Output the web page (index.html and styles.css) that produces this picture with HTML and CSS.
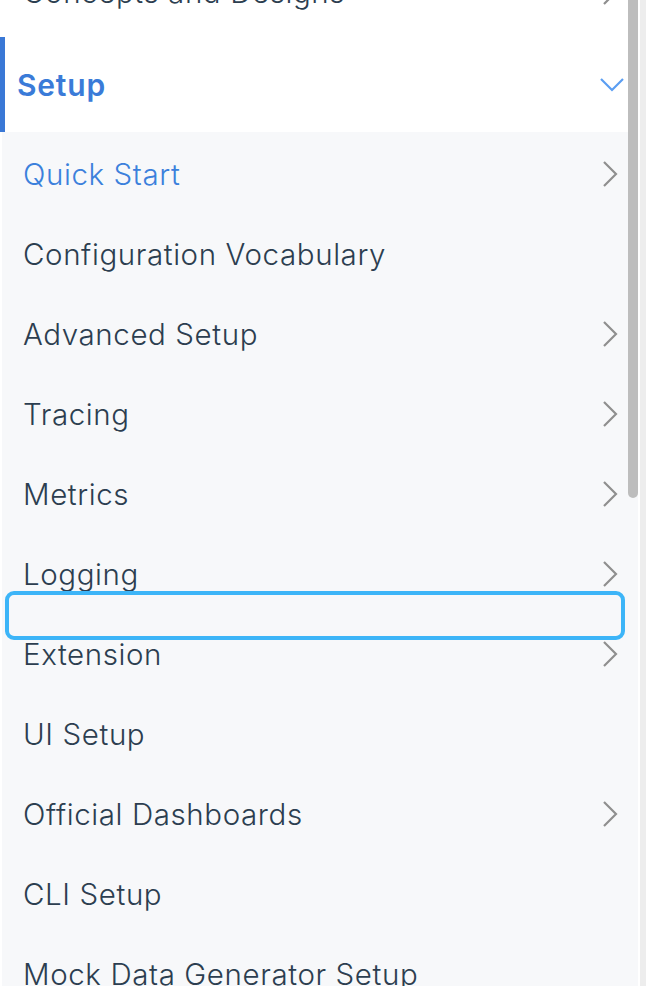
FILE: index.html
```html
<!DOCTYPE html>
<html>
<head>
<meta charset="utf-8">
<link rel="stylesheet" href="styles.css">
</head>
<body>
<div class="page">
  <nav class="sidebar">
    <div class="row prev">
      <span class="label">Concepts and Designs</span>
      <svg class="chev" viewBox="0 0 16 28"><path d="M2 2 L14 14 L2 26"/></svg>
    </div>
    <div class="group-head">
      <span class="label">Setup</span>
      <svg class="chev-down" viewBox="0 0 26 16"><path d="M2 2 L13 13 L24 2"/></svg>
    </div>
    <ul class="sub">
      <li class="row active"><span class="label">Quick Start</span><svg class="chev" viewBox="0 0 16 28"><path d="M2 2 L14 14 L2 26"/></svg></li>
      <li class="row"><span class="label">Configuration Vocabulary</span></li>
      <li class="row"><span class="label">Advanced Setup</span><svg class="chev" viewBox="0 0 16 28"><path d="M2 2 L14 14 L2 26"/></svg></li>
      <li class="row"><span class="label">Tracing</span><svg class="chev" viewBox="0 0 16 28"><path d="M2 2 L14 14 L2 26"/></svg></li>
      <li class="row"><span class="label">Metrics</span><svg class="chev" viewBox="0 0 16 28"><path d="M2 2 L14 14 L2 26"/></svg></li>
      <li class="row"><span class="label">Logging</span><svg class="chev" viewBox="0 0 16 28"><path d="M2 2 L14 14 L2 26"/></svg></li>
      <li class="row"><span class="label">Extension</span><svg class="chev" viewBox="0 0 16 28"><path d="M2 2 L14 14 L2 26"/></svg></li>
      <li class="row"><span class="label">UI Setup</span></li>
      <li class="row"><span class="label">Official Dashboards</span><svg class="chev" viewBox="0 0 16 28"><path d="M2 2 L14 14 L2 26"/></svg></li>
      <li class="row"><span class="label">CLI Setup</span></li>
      <li class="row"><span class="label">Mock Data Generator Setup</span></li>
    </ul>
    <div class="focus-ring"></div>
  </nav>
  <div class="scrollbar"><div class="thumb"></div></div>
  <div class="edge"></div>
</div>
</body>
</html>
```
FILE: styles.css
```css
html, body {
  margin: 0;
  padding: 0;
  background: #ffffff;
}
body {
  font-family: Inter, "Noto Sans", "Liberation Sans", sans-serif;
  color: #2c3e50;
}
.page {
  display: flex;
  width: 646px;
  height: 986px;
  overflow: hidden;
}
.sidebar {
  position: relative;
  width: 628px;
  flex: none;
  background: #ffffff;
}
.row {
  display: flex;
  align-items: center;
  justify-content: space-between;
  height: 80px;
  padding: 0 10px 0 23px;
  box-sizing: border-box;
  font-size: 29.5px;
  font-weight: 300;
  letter-spacing: 0.6px;
}
.prev {
  margin-top: -48px;
  margin-bottom: 5px;
}
.label {
  white-space: nowrap;
}
.chev {
  width: 16px;
  height: 28px;
  flex: none;
}
.chev path {
  fill: none;
  stroke: #8f8f8f;
  stroke-width: 2.2;
}
.group-head {
  display: flex;
  align-items: center;
  justify-content: space-between;
  height: 95px;
  padding: 0 3px 0 17px;
  border-left: 5px solid #3a78d6;
  box-sizing: border-box;
  font-size: 30px;
  font-weight: 600;
  letter-spacing: 0.8px;
  color: #3a7bd8;
}
.group-head .label {
  margin-left: -5px;
}
.chev-down {
  width: 26px;
  height: 16px;
  flex: none;
}
.chev-down path {
  fill: none;
  stroke: #5b9ef2;
  stroke-width: 2.2;
}
.sub {
  list-style: none;
  margin: 0 0 0 2px;
  padding: 2px 0 0 0;
  background: #f7f8fa;
  height: 900px;
}
.sub .row {
  padding-left: 21px;
  padding-right: 10px;
}
.row.active {
  color: #3b80dc;
}
.focus-ring {
  position: absolute;
  left: 5px;
  top: 591px;
  width: 620px;
  height: 49px;
  box-sizing: border-box;
  border: 4.5px solid #3db5f8;
  border-radius: 9px;
}
.scrollbar {
  width: 10px;
  flex: none;
  background: #f7f8fa;
}
.thumb {
  height: 498px;
  background: #bdbdbd;
  border-radius: 0 0 5px 5px;
}
.edge {
  flex: 1;
  border-left: 2px solid #ffffff;
  background: #ededed;
}
```
